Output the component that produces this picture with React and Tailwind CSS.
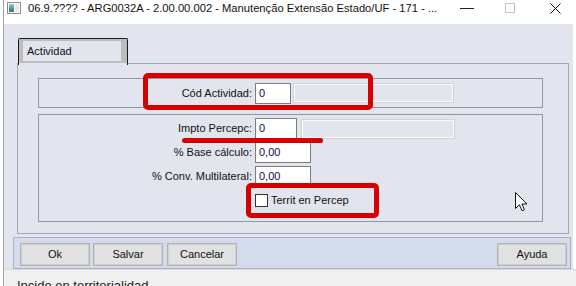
import React from 'react';

const Field = ({ value, w }) => (
  <div className={`h-[21px] shrink-0 ${w} bg-white border border-[#7d7d7d] pl-[3px] flex items-center text-[#0d0d45]`}>
    {value}
  </div>
);

const Disabled = ({ w, ml }) => (
  <div className={`h-[20px] shrink-0 ${w} ${ml} border border-[#d2d2d2] bg-[#e2e5ed] shadow-[inset_0_0_0_1px_#fbfbfb]`} />
);

const Row = ({ label, children }) => (
  <div className="h-[21px] shrink-0 flex items-center">
    <div className="w-[214px] shrink-0 text-right pr-[1px] text-[#111]">{label}</div>
    <div className="ml-[2px] flex items-center">{children}</div>
  </div>
);

const Btn = ({ children, className = '' }) => (
  <button className={`w-[70px] h-[23px] shrink-0 bg-[#e1e1e1] border border-[#b3b3b3] shadow-[inset_0_0_0_1px_#cfcfcf] text-[#111] flex items-center justify-center ${className}`}>
    {children}
  </button>
);

const App = () => {
  return (
    <div className="w-[576px] h-[286px] overflow-hidden bg-white flex relative font-['Liberation_Sans',Arial,sans-serif] text-[11px] leading-[13px]">
      <div className="w-[3px] shrink-0 bg-white" />
      <div className="w-px shrink-0 bg-[#a3a3a3]" />

      <div className="flex-1 flex flex-col min-w-0">
        {/* Title bar */}
        <div className="h-[24px] shrink-0 bg-white flex items-start pt-[2px] pr-[15px] text-[#111]">
          <div className="h-[12px] flex items-center w-full">
            <svg className="ml-[3px] shrink-0" width="14" height="12" viewBox="0 0 14 12">
              <rect x="0.5" y="0.5" width="13" height="11" fill="#fff" stroke="#8c8c8c" />
              <defs>
                <linearGradient id="ic" x1="0" y1="0" x2="0" y2="1">
                  <stop offset="0" stopColor="#8fc9c3" />
                  <stop offset="1" stopColor="#2d6f8a" />
                </linearGradient>
              </defs>
              <rect x="2" y="2" width="5" height="8" fill="url(#ic)" />
              <rect x="8" y="2" width="4" height="8" fill="#e8e8e8" />
            </svg>
            <span className="ml-[7px] text-[11.2px] whitespace-nowrap">
              06.9.???? - ARG0032A - 2.00.00.002 - Manutenção Extensão Estado/UF - 171 - ...
            </span>
            <div className="ml-auto w-[14px] h-px bg-[#222] shrink-0" />
            <div className="ml-[31px] w-[10px] h-[10px] border border-[#c4c4c4] shrink-0" />
            <svg className="ml-[35px] shrink-0" width="11" height="11" viewBox="0 0 11 11">
              <path d="M0.5 0.5 L10.5 10.5 M10.5 0.5 L0.5 10.5" stroke="#111" strokeWidth="1" />
            </svg>
          </div>
        </div>

        {/* Client */}
        <div className="h-[245px] shrink-0 flex">
          <div className="flex-1 bg-[#e2e5ed] flex flex-col pl-[9px] pr-[2px] pt-[14px]">
            {/* Tab */}
            <div className="relative z-10 shrink-0 ml-[5px] w-[110px] h-[27px] border border-b-0 border-[#1c1c1c] rounded-t-[2px] bg-[#e2e5ed]">
              <div className="h-[24px] border-[#bdbdbd] border-l-[4px] border-r-[6px] border-t-[2px] border-b-[2px] bg-[#e2e5ed] flex items-center pl-[4px] text-[#111]">
                Actividad
              </div>
            </div>

            {/* Panel */}
            <div className="-mt-[2px] shrink-0 ml-[4px] mr-[2px] h-[171px] border border-[#a2a7b1] pt-[14px] pl-[20px] pr-[25px]">
              <div className="h-[30px] border border-[#9097a3] flex items-center">
                <Row label="Cód Actividad:">
                  <Field value="0" w="w-[36px]" />
                  <Disabled w="w-[161px]" ml="ml-[2px]" />
                </Row>
              </div>

              <div className="mt-[6px] h-[108px] border border-[#9097a3] flex flex-col pt-[3px] gap-[3px]">
                <Row label="Impto Percepc:">
                  <Field value="0" w="w-[42px]" />
                  <Disabled w="w-[154px]" ml="ml-[4px]" />
                </Row>
                <Row label="% Base cálculo:">
                  <Field value="0,00" w="w-[56px]" />
                </Row>
                <Row label="% Conv. Multilateral:">
                  <Field value="0,00" w="w-[56px]" />
                </Row>
                <Row label="">
                  <div className="w-[13px] h-[13px] shrink-0 bg-white border border-[#333]" />
                  <span className="ml-[3px] text-[#111] whitespace-nowrap">Territ en Percep</span>
                </Row>
              </div>
            </div>

            {/* Button bar */}
            <div className="mt-[3px] shrink-0 h-[32px] border border-[#a9b1c2] bg-[#d4dcec] flex items-start pt-[5px] pl-[6px] pr-[3px]">
              <Btn>Ok</Btn>
              <Btn className="ml-[3px]">Salvar</Btn>
              <Btn className="ml-[4px]">Cancelar</Btn>
              <Btn className="ml-auto w-[69px]">Ayuda</Btn>
            </div>
          </div>
          <div className="w-[3px] shrink-0 bg-white" />
        </div>

        {/* Status */}
        <div className="flex-1 min-h-0 overflow-hidden bg-[#f0f0f0] border-t border-[#dadada] pl-[13px] pt-[8px] text-[13px] leading-[15px] text-[#222] whitespace-nowrap">
          Incide en territorialidad
        </div>
      </div>

      {/* Annotations */}
      <div className="absolute left-[143px] top-[73px] w-[230px] h-[37px] border-[5px] border-[#d50000] rounded-[5px]" />
      <div className="absolute left-[182px] top-[138px] w-[141px] h-[5px] bg-[#d50000] rounded-full" />
      <div className="absolute left-[246px] top-[183px] w-[133px] h-[35px] border-[5px] border-[#d50000] rounded-[5px]" />

      {/* Mouse cursor */}
      <svg className="absolute left-[515px] top-[192px]" width="13" height="20" viewBox="0 0 13 20">
        <path d="M0.5 0.5 L0.5 16.5 L4.4 12.8 L7 18.7 L9.4 17.7 L6.9 12 L12 12 Z" fill="#fff" stroke="#111" strokeWidth="1" strokeLinejoin="round" />
      </svg>
    </div>
  );
};

export default App;
